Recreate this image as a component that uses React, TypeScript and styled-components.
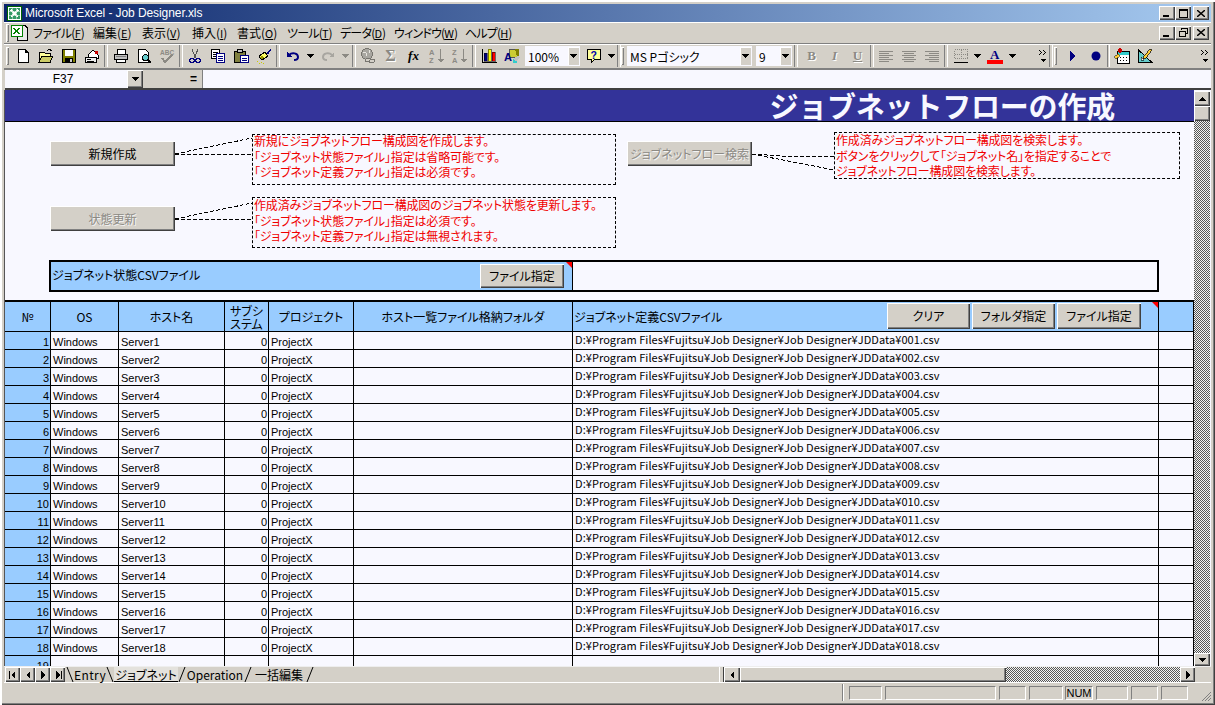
import React from "react";
import styled, { createGlobalStyle, css } from "styled-components";

const JP = `"Noto Sans CJK JP", "Liberation Sans", sans-serif`;
const FACE = "#D4D0C8";
const SHADOW = "#808080";

const Global = createGlobalStyle`
  html, body { margin: 0; padding: 0; background: ${FACE}; }
  * { box-sizing: border-box; }
  #root { width: 1215px; height: 705px; overflow: hidden; }
`;

const raised = css`
  background: ${FACE};
  box-shadow: inset 1px 1px 0 #fff, inset -1px -1px 0 #404040, inset -2px -2px 0 ${SHADOW};
`;
const checker = css`
  background-color: #fff;
  background-image: repeating-conic-gradient(#555 0 25%, #f2f2f2 0 50%);
  background-size: 2px 2px;
`;

const Window = styled.div`
  width: 1215px;
  height: 705px;
  padding: 4px 4px 3px 4px;
  display: flex;
  flex-direction: column;
  background: ${FACE};
  box-shadow: inset 2px 2px 0 #fff, inset -1px -1px 0 #404040, inset -2px -2px 0 ${SHADOW};
  font-family: ${JP};
  font-feature-settings: "palt";
  color: #000;
  font-size: 12px;
`;

/* ---------- title + menu ---------- */
const TitleBar = styled.div`
  height: 18px;
  flex: none;
  display: flex;
  align-items: center;
  gap: 3px;
  padding: 0 2px 0 3px;
  background: linear-gradient(to right, #0a246a, #a6caf0);
  color: #fff;
`;
const TitleText = styled.span`
  flex: 1;
  font-family: "Liberation Sans", sans-serif;
  font-size: 12px;
  letter-spacing: -0.08px;
`;
const CaptionGroup = styled.div`
  display: flex;
  align-items: center;
`;
const CaptionBtn = styled.div<{ $gap?: number }>`
  ${raised}
  width: 16px;
  height: 14px;
  margin-left: ${(p) => p.$gap ?? 0}px;
  display: flex;
  align-items: center;
  justify-content: center;
`;
const MenuBar = styled.div`
  height: 22px;
  flex: none;
  display: flex;
  align-items: center;
  padding-left: 2px;
  border-bottom: 1px solid ${SHADOW};
  box-shadow: inset 0 1px 0 #fff;
`;
const Grip = styled.div<{ $h?: number }>`
  width: 3px;
  height: ${(p) => p.$h ?? 18}px;
  flex: none;
  box-shadow: inset 1px 1px 0 #fff, inset -1px -1px 0 ${SHADOW};
`;
const MenuIcon = styled.div`
  width: 20px;
  flex: none;
  display: flex;
  justify-content: center;
`;
const MenuItem = styled.span<{ $w: number; $kana?: boolean }>`
  width: ${(p) => p.$w}px;
  flex: none;
  white-space: nowrap;
  padding-left: 4px;
  font-size: 12px;
  letter-spacing: ${(p) => (p.$kana ? -0.8 : 0)}px;
  u { font-size: 11px; letter-spacing: 0; }
`;
const MenuRight = styled.div`
  margin-left: auto;
  padding-right: 2px;
  display: flex;
`;

/* ---------- toolbar ---------- */
const ToolBar = styled.div`
  height: 26px;
  flex: none;
  display: flex;
  align-items: center;
  padding-left: 2px;
  border-bottom: 2px solid ${SHADOW};
  box-shadow: inset 0 1px 0 #fff;
`;
const Cell = styled.div<{ $w?: number }>`
  width: ${(p) => p.$w ?? 23}px;
  height: 22px;
  flex: none;
  display: flex;
  align-items: center;
  justify-content: center;
`;
const Sep = styled.div<{ $w?: number }>`
  width: ${(p) => p.$w ?? 6}px;
  height: 22px;
  flex: none;
  display: flex;
  justify-content: center;
  &::before {
    content: "";
    width: 2px;
    height: 100%;
    border-left: 1px solid ${SHADOW};
    border-right: 1px solid #fff;
  }
`;
const Combo = styled.div<{ $w: number; $ml?: number }>`
  width: ${(p) => p.$w}px;
  height: 20px;
  margin-left: ${(p) => p.$ml ?? 0}px;
  flex: none;
  display: flex;
  align-items: center;
  background: #f8f8ff;
  padding-left: 3px;
  font-size: 12px;
  white-space: nowrap;
`;
const ComboText = styled.span`
  flex: 1;
`;
const ComboArrow = styled.div`
  background: ${FACE};
  box-shadow: inset 1px 1px 0 #fff;
  width: 11px;
  height: 18px;
  margin-right: 1px;
  flex: none;
  display: flex;
  align-items: center;
  justify-content: center;
`;
const Glyph = styled.span<{ $serif?: boolean; $italic?: boolean; $u?: boolean; $size?: number }>`
  font-family: ${(p) => (p.$serif ? `"Liberation Serif", serif` : `"Liberation Sans", sans-serif`)};
  font-weight: bold;
  font-style: ${(p) => (p.$italic ? "italic" : "normal")};
  text-decoration: ${(p) => (p.$u ? "underline" : "none")};
  font-size: ${(p) => p.$size ?? 13}px;
  color: #8c8a84;
  text-shadow: 1px 1px 0 #fff;
`;
const FxGlyph = styled.span`
  font-family: "Liberation Serif", serif;
  font-style: italic;
  font-weight: bold;
  font-size: 13px;
  color: #000;
`;
const Flip = styled.span`
  display: block;
  transform: scaleX(-1);
`;

/* ---------- formula bar ---------- */
const FormulaBar = styled.div`
  height: 20px;
  flex: none;
  display: flex;
  border-bottom: 2px solid #404040;
  background: #f8f8ff;
  margin-left: 1px;
`;
const NameBox = styled.div`
  width: 138px;
  flex: none;
  display: flex;
  align-items: center;
  background: #f8f8ff;
`;
const NameText = styled.span`
  flex: 1;
  text-align: center;
  font-family: "Liberation Sans", sans-serif;
  font-size: 12px;
  padding-right: 6px;
`;
const NameArrow = styled.div`
  ${raised}
  width: 16px;
  height: 18px;
  flex: none;
  display: flex;
  align-items: center;
  justify-content: center;
`;
const FormulaGap = styled.div`
  width: 60px;
  flex: none;
  background: ${FACE};
  border-right: 1px solid ${SHADOW};
  display: flex;
  align-items: center;
  justify-content: flex-end;
  padding-right: 5px;
  font-weight: bold;
  font-family: "Liberation Sans", sans-serif;
`;

/* ---------- sheet ---------- */
const SheetArea = styled.div`
  flex: 1;
  min-height: 0;
  display: flex;
`;
const Sheet = styled.div`
  flex: 1;
  min-width: 0;
  background: #f8f8ff;
  border-left: 1px solid #555;
  overflow: hidden;
  font-size: 12px;
`;
const Banner = styled.div`
  height: 32px;
  background: #333399;
  border-bottom: 1px solid #000;
  color: #f8f8ff;
  font-size: 29px;
  font-weight: bold;
  line-height: 31px;
  text-align: right;
  padding-right: 79px;
  white-space: nowrap;
  font-feature-settings: normal;
  letter-spacing: -0.2px;
`;
const Controls = styled.div`
  height: 178px;
  padding-top: 10px;
`;
const ControlCols = styled.div`
  display: flex;
  height: 128px;
`;
const LeftCol = styled.div`
  width: 622px;
  padding: 2px 0 0 45px;
  display: flex;
  flex-direction: column;
  gap: 12px;
`;
const RightCol = styled.div`
  flex: 1;
`;
const Action = styled.div`
  display: flex;
  align-items: flex-start;
`;
const Push = styled.div<{ $off?: boolean; $w?: number; $h?: number; $mt?: number; $pb?: number }>`
  ${raised}
  width: ${(p) => p.$w ?? 125}px;
  height: ${(p) => p.$h ?? 25}px;
  margin-top: ${(p) => p.$mt ?? 0}px;
  padding-bottom: ${(p) => p.$pb ?? 0}px;
  flex: none;
  display: flex;
  align-items: center;
  justify-content: center;
  white-space: nowrap;
  color: ${(p) => (p.$off ? "#8c8a84" : "#000")};
  text-shadow: ${(p) => (p.$off ? "1px 1px 0 #f4f4f4" : "none")};
`;
const Callout = styled.div<{ $w: number; $h: number }>`
  width: ${(p) => p.$w}px;
  height: ${(p) => p.$h}px;
  flex: none;
  border: 1px dashed #000;
  color: #f00000;
  font-size: 12px;
  line-height: 15.5px;
  letter-spacing: -0.15px;
  padding: 0 0 0 1px;
  white-space: nowrap;
`;
const CalloutText = styled.div<{ $mt?: number }>`
  margin-top: ${(p) => p.$mt ?? -1}px;
`;
const Connector = styled.svg<{ $w: number; $h: number }>`
  width: ${(p) => p.$w}px;
  height: ${(p) => p.$h}px;
  flex: none;
  display: block;
`;
const CsvRow = styled.div`
  width: 1110px;
  height: 32px;
  margin: 0 0 0 44px;
  border: 2px solid #000;
  display: flex;
`;
const CsvLabel = styled.div`
  width: 522px;
  flex: none;
  position: relative;
  background: #99ccff;
  border-right: 1px solid #000;
  display: flex;
  align-items: center;
  justify-content: space-between;
  padding: 0 8px 0 1px;
`;
const CsvText = styled.span`
  margin-top: -3px;
`;
const Comment = styled.div`
  position: absolute;
  top: 0;
  right: 0;
  width: 0;
  height: 0;
  border-top: 6px solid #f00;
  border-left: 6px solid transparent;
`;

const COLS = "46px 68px 106px 44px 85px 219px 586px 35px";
const GridRow = styled.div<{ $head?: boolean }>`
  display: grid;
  grid-template-columns: ${COLS};
  height: ${(p) => (p.$head ? 32 : 18)}px;
  ${(p) => p.$head && "border-top: 2px solid #000;"}
`;
const GridCell = styled.div<{ $blue?: boolean; $num?: boolean }>`
  min-width: 0;
  border-right: 1px solid #000;
  border-bottom: 1px solid #000;
  background: ${(p) => (p.$blue ? "#99ccff" : "#f8f8ff")};
  text-align: ${(p) => (p.$num ? "right" : "left")};
  padding: 3px ${(p) => (p.$num ? 1 : 0)}px 0 ${(p) => (p.$num ? 0 : 2)}px;
  font-family: "Liberation Sans", ${JP};
  font-size: 11px;
  line-height: 14px;
  white-space: nowrap;
  overflow: hidden;
`;
const PathCell = styled(GridCell)`
  font-family: ${JP};
  font-size: 11px;
  line-height: 15px;
  letter-spacing: 0.06px;
  padding-top: 0;
`;
const HeadCell = styled.div`
  position: relative;
  min-width: 0;
  border-right: 1px solid #000;
  border-bottom: 1px solid #000;
  background: #99ccff;
  display: flex;
  align-items: center;
  justify-content: center;
  text-align: center;
  line-height: 13px;
  white-space: nowrap;
`;
const HeadFileCell = styled(HeadCell)`
  justify-content: flex-start;
  text-align: left;
  padding-left: 1px;
`;
const HeadLabel = styled.span`
  width: 313px;
  flex: none;
`;
const HeadButtons = styled.div`
  display: flex;
  gap: 2px;
  margin-top: -1px;
`;

/* ---------- scroll bars ---------- */
const VScroll = styled.div`
  width: 17px;
  flex: none;
  display: flex;
  flex-direction: column;
  padding: 1px 1px 0 0;
  background: #f8f8ff;
`;
const ScrollBtn = styled.div<{ $w?: number; $h?: number }>`
  ${raised}
  width: ${(p) => p.$w ?? 16}px;
  height: ${(p) => p.$h ?? 15}px;
  flex: none;
  display: flex;
  align-items: center;
  justify-content: center;
`;
const ScrollTrack = styled.div`
  ${checker}
  flex: 1;
`;
const BottomBar = styled.div`
  height: 17px;
  flex: none;
  display: flex;
  padding-left: 1px;
  border-top: 1px solid #eee;
  border-bottom: 1px solid #fff;
`;
const Tabs = styled.div`
  width: 654px;
  flex: none;
  display: flex;
  align-items: flex-start;
  padding-left: 1px;
  height: 15px;
`;
const Tab = styled.span<{ $active?: boolean; $w: number; $ls?: number }>`
  width: ${(p) => p.$w}px;
  flex: none;
  height: 15px;
  line-height: 15px;
  text-align: center;
  white-space: nowrap;
  font-size: 12px;
  letter-spacing: ${(p) => p.$ls ?? 0}px;
  ${(p) => p.$active && "border-bottom: 1px solid #000; background: #e4e2dd;"}
`;
const Slash = styled.svg`
  width: 8px;
  height: 15px;
  flex: none;
  display: block;
`;
const Splitter = styled.div`
  width: 5px;
  flex: none;
  height: 15px;
  border-left: 1px solid #fff;
  border-right: 1px solid #404040;
`;
const HThumb = styled.div`
  ${raised}
  width: 266px;
  flex: none;
  height: 15px;
`;
const HTrack = styled.div`
  ${checker}
  flex: 1;
  height: 15px;
`;

/* ---------- status ---------- */
const StatusBar = styled.div`
  height: 19px;
  flex: none;
  display: flex;
  align-items: center;
  padding-left: 838px;
`;
const StatusDivider = styled.div`
  width: 2px;
  height: 17px;
  flex: none;
  margin-right: 2px;
  border-left: 1px solid ${SHADOW};
  border-right: 1px solid #fff;
`;
const StatusPanel = styled.div<{ $w: number; $ml?: number }>`
  width: ${(p) => p.$w}px;
  height: 14px;
  margin-left: ${(p) => p.$ml ?? 3}px;
  flex: none;
  border: 1px solid;
  border-color: ${SHADOW} #fff #fff ${SHADOW};
  font-family: "Liberation Sans", sans-serif;
  font-size: 11px;
  line-height: 12px;
  text-align: center;
`;
const GripCorner = styled.svg`
  margin-left: 12px;
  width: 12px;
  height: 12px;
  flex: none;
  display: block;
  align-self: flex-end;
`;

/* ---------- icons ---------- */
const IconSvg = styled.svg`
  display: block;
`;
type IconProps = { children: React.ReactNode; w?: number; h?: number };
const Ic = ({ children, w = 16, h = 16 }: IconProps) => (
  <IconSvg width={w} height={h} viewBox={`0 0 ${w} ${h}`} shapeRendering="crispEdges">
    {children}
  </IconSvg>
);
const Down = ({ c = "#000" }: { c?: string }) => (
  <Ic w={7} h={4}><path d="M0 0h7L3.5 4z" fill={c} /></Ic>
);
const ArrowV = ({ up }: { up?: boolean }) => (
  <Ic w={7} h={4}><path d={up ? "M3.5 0L7 4H0z" : "M0 0h7L3.5 4z"} fill="#000" /></Ic>
);
const ArrowH = ({ left, bar }: { left?: boolean; bar?: boolean }) => (
  <Ic w={8} h={8}>
    <path d={left ? "M6 0v8L2 4z" : "M2 0v8l4-4z"} fill="#000" />
    {bar && <rect x={left ? 0 : 7} y={0} width={1} height={8} fill="#000" />}
  </Ic>
);
const Doc = () => (
  <Ic><path d="M3 1.5h7l3 3v10H3z" fill="#fff" stroke="#000" /><path d="M10 1.5v3h3" fill="none" stroke="#000" /></Ic>
);
const Open = () => (
  <Ic>
    <path d="M1 4h5l1 1h5v9H1z" fill="#ffff99" stroke="#000" />
    <path d="M1 14l3-6h11l-3 6z" fill="#cccc66" stroke="#000" />
    <path d="M9 3l2-2 3 2" fill="none" stroke="#000" />
  </Ic>
);
const Save = () => (
  <Ic>
    <rect x="1.5" y="1.5" width="13" height="13" fill="#808000" stroke="#000" />
    <rect x="4" y="2" width="8" height="6" fill="#fff" />
    <rect x="4" y="10" width="8" height="5" fill="#000" />
    <rect x="9" y="11" width="2" height="3" fill="#ccc" />
  </Ic>
);
const Mail = () => (
  <Ic>
    <path d="M4 7l5-5 5 5v3H4z" fill="#fff" stroke="#000" />
    <rect x="11" y="3" width="3" height="3" fill="#c00" />
    <rect x="1.5" y="9.5" width="11" height="5" fill="#eee" stroke="#000" />
    <path d="M3 11.5h4M3 13h7" stroke="#000" />
  </Ic>
);
const Printer = () => (
  <Ic>
    <path d="M4 6V1.5h8V6" fill="#fff" stroke="#000" />
    <path d="M1.5 6.5h13v5h-13z" fill="#c0c0c0" stroke="#000" />
    <path d="M3.5 11.5h9v3h-9z" fill="#fff" stroke="#000" />
    <path d="M3 8.5h10" stroke="#808080" />
  </Ic>
);
const Preview = () => (
  <Ic>
    <path d="M2.5 1.5h7l3 3v10h-10z" fill="#fff" stroke="#000" />
    <circle cx="9.5" cy="9.5" r="3" fill="#66cccc" stroke="#000" />
    <path d="M12 12l3 3" stroke="#000" strokeWidth="2" />
  </Ic>
);
const Spell = () => (
  <Ic>
    <text x="1" y="6.5" fontSize="6.5" fontFamily="Liberation Sans" fontWeight="bold" fill="#8c8a84">ABC</text>
    <path d="M3 10l3 4 7-7" fill="none" stroke="#8c8a84" strokeWidth="2" />
  </Ic>
);
const Cut = () => (
  <Ic>
    <path d="M5 1l3.5 9M11 1L7.5 10" stroke="#555" fill="none" />
    <circle cx="5" cy="12.5" r="2.2" fill="none" stroke="#000080" strokeWidth="1.3" />
    <circle cx="11" cy="12.5" r="2.2" fill="none" stroke="#000080" strokeWidth="1.3" />
  </Ic>
);
const Copy = () => (
  <Ic>
    <rect x="1.5" y="1.5" width="8" height="9" fill="#fff" stroke="#000" />
    <path d="M3 4h5M3 6h5M3 8h3" stroke="#000" />
    <rect x="6.5" y="5.5" width="8" height="9" fill="#fff" stroke="#000080" />
    <path d="M8 8h5M8 10h5M8 12h5" stroke="#000080" />
  </Ic>
);
const Paste = () => (
  <Ic>
    <rect x="1.5" y="3.5" width="11" height="11" fill="#808040" stroke="#000" />
    <rect x="4.5" y="1.5" width="5" height="3" fill="#c0c0c0" stroke="#000" />
    <rect x="7.5" y="7.5" width="8" height="7" fill="#fff" stroke="#000080" />
    <path d="M9 10h5M9 12h5" stroke="#000080" />
  </Ic>
);
const Brush = () => (
  <Ic>
    <path d="M3 8l6-4 3 4-6 4z" fill="#ffff66" stroke="#000" />
    <path d="M10 5l4-4 1 1-3 5z" fill="#000080" />
    <path d="M1 13h1M3 15h1M5 14h1M7 15h1" stroke="#cccc00" />
    <path d="M4 10l3-2M5 11l3-2" stroke="#999900" />
  </Ic>
);
const Undo = ({ c = "#000080" }: { c?: string }) => (
  <Ic>
    <path d="M2 4v5h5z" fill={c} />
    <path d="M4 7c3-3 9-2 9 2 0 2-2 3-4 3" fill="none" stroke={c} strokeWidth="2" shapeRendering="auto" />
  </Ic>
);
const LinkIc = () => (
  <Ic>
    <circle cx="7" cy="6" r="5.5" fill="#a8a6a0" stroke="#77756f" />
    <path d="M3 4l3 1 1 3M9 2l1 3" stroke="#e8e6e0" fill="none" />
    <rect x="5.5" y="10.5" width="5" height="3" rx="1.5" fill="#d4d0c8" stroke="#77756f" />
    <rect x="9.5" y="11.5" width="5" height="3" rx="1.5" fill="#d4d0c8" stroke="#77756f" />
  </Ic>
);
const SortIc = ({ top, bot }: { top: string; bot: string }) => (
  <Ic>
    <text x="0" y="7" fontSize="7.5" fontFamily="Liberation Sans" fontWeight="bold" fill="#8c8a84">{top}</text>
    <text x="0" y="15" fontSize="7.5" fontFamily="Liberation Sans" fontWeight="bold" fill="#8c8a84">{bot}</text>
    <path d="M11.5 1v11" stroke="#8c8a84" />
    <path d="M9 11h6l-3 4z" fill="#8c8a84" />
  </Ic>
);
const Chart = () => (
  <Ic>
    <rect x="3" y="5" width="3" height="8" fill="#000080" stroke="#000" strokeWidth=".5" />
    <rect x="7" y="1" width="3" height="12" fill="#ff0" stroke="#000" strokeWidth=".5" />
    <rect x="11" y="4" width="3" height="9" fill="#f00" stroke="#000" strokeWidth=".5" />
    <path d="M1 1v13h15" fill="none" stroke="#000" />
  </Ic>
);
const Drawing = () => (
  <Ic>
    <rect x="5.5" y="1.5" width="8" height="8" fill="#cccc33" stroke="#555" />
    <path d="M11 1h4v8h-2z" fill="#808000" />
    <text x="0" y="13" fontSize="11" fontFamily="Liberation Sans" fontWeight="bold" fill="#000080">A</text>
    <circle cx="11" cy="13" r="2.5" fill="#33cccc" />
    <path d="M9 11l5-3 2 2-4 3z" fill="#c0c0c0" />
  </Ic>
);
const Help = () => (
  <Ic>
    <path d="M1.5 1.5h13v10h-6l-3 3v-3h-4z" fill="#ffff99" stroke="#000" />
    <text x="4.6" y="10.5" fontSize="10.5" fontFamily="Liberation Sans" fontWeight="bold" fill="#0000aa">?</text>
  </Ic>
);
const Align = ({ mode }: { mode: "l" | "c" | "r" }) => {
  const pick = (long: boolean) => {
    const len = long ? 14 : 10;
    const x = mode === "l" ? 1 : mode === "c" ? 8 - len / 2 : 15 - len;
    return [x, len];
  };
  return (
    <Ic>
      {[3, 5, 7, 9, 11, 13].map((y, i) => {
        const [x, len] = pick(i % 2 === 0);
        return <path key={y} d={`M${x} ${y}h${len}`} stroke="#8c8a84" />;
      })}
    </Ic>
  );
};
const Borders = () => (
  <Ic>
    <path d="M1.5 1.5h13v9h-13zM8 1.5v9M1.5 6h13" fill="none" stroke="#8c8a84" strokeDasharray="1 1" />
    <path d="M1 14h14" stroke="#000" strokeWidth="1" />
  </Ic>
);
const FontColor = () => (
  <Ic h={16}>
    <text x="3" y="11" fontSize="13" fontFamily="Liberation Serif" fontWeight="bold" fill="#000080">A</text>
    <rect x="0" y="12" width="16" height="4" fill="#f00" />
  </Ic>
);
const Chevrons = () => (
  <Ic w={8} h={14}>
    <path d="M0 1l2.5 2.5L0 6M4 1l2.5 2.5L4 6" fill="none" stroke="#000" strokeWidth="1.2" />
    <path d="M1 10h6l-3 3z" fill="#000" />
  </Ic>
);
const Play = () => (
  <Ic w={8} h={10}><path d="M1 0l6 5-6 5z" fill="#000080" /></Ic>
);
const Rec = () => (
  <Ic w={10} h={10}><circle cx="5" cy="5" r="4.5" fill="#000080" shapeRendering="auto" /></Ic>
);
const Form = () => (
  <Ic>
    <rect x="3.5" y="3.5" width="12" height="12" fill="#fff" stroke="#000" />
    <rect x="4" y="4" width="11" height="3" fill="#33cccc" />
    <path d="M6 9h1M9 9h1M12 9h1M6 12h1M9 12h1M12 12h1" stroke="#000" />
    <circle cx="6" cy="2.5" r="2.3" fill="#c00" />
    <path d="M0 9l4-3 2 2-4 3z" fill="#ffcc33" stroke="#000" strokeWidth=".5" />
  </Ic>
);
const Design = () => (
  <Ic>
    <path d="M1.5 2v12.5H15z" fill="#66cccc" stroke="#000" />
    <path d="M4 9v3h3z" fill="#fff" stroke="#000" strokeWidth=".6" />
    <path d="M7 8l6-7 2 1-6 8-3 1z" fill="#ffcc33" stroke="#000" strokeWidth=".7" />
  </Ic>
);
const ExcelLogo = () => (
  <Ic w={15} h={15}>
    <rect x="0.5" y="0.5" width="14" height="14" fill="#fff" stroke="#006600" />
    <rect x="2" y="2" width="11" height="11" fill="#339966" />
    <path d="M4 4l7 7M11 4l-7 7" stroke="#fff" strokeWidth="2" />
    <path d="M2 5.5h11M2 9.5h11M5.5 2v11M9.5 2v11" stroke="#cfe8d8" strokeWidth=".6" />
  </Ic>
);
const SheetIc = () => (
  <Ic w={17} h={17}>
    <path d="M6 1.5h8l2 2v13H6z" fill="#e8e8e8" stroke="#000" />
    <rect x="0.5" y="1.5" width="11" height="11" fill="#fff" stroke="#008000" />
    <path d="M3 4l5 6M8 4l-5 6" stroke="#008000" strokeWidth="1.6" />
  </Ic>
);
const MinIc = () => <Ic w={8} h={8}><rect x="0" y="6" width="6" height="2" fill="#000" /></Ic>;
const MaxIc = () => <Ic w={9} h={9}><path d="M.5 1h8v7.5h-8z" fill="none" stroke="#000" /><rect x="0" y="0" width="9" height="2" fill="#000" /></Ic>;
const CloseIc = () => <Ic w={8} h={7}><path d="M0 0l8 7M8 0L0 7" stroke="#000" strokeWidth="1.4" shapeRendering="auto" /></Ic>;
const RestoreIc = () => (
  <Ic w={9} h={9}>
    <path d="M2.5 2V.5h6v5H7" fill="none" stroke="#000" />
    <path d="M.5 3h6v5.5h-6z" fill="none" stroke="#000" />
    <rect x="0" y="2.5" width="7" height="1.5" fill="#000" />
  </Ic>
);

/* ---------- data ---------- */
const MENU: [string, string, number, boolean][] = [
  ["ファイル", "F", 60, true],
  ["編集", "E", 49, false],
  ["表示", "V", 50, false],
  ["挿入", "I", 45, false],
  ["書式", "O", 50, false],
  ["ツール", "T", 53, true],
  ["データ", "D", 54, true],
  ["ウィンドウ", "W", 71, true],
  ["ヘルプ", "H", 50, true],
];
const ROWS = Array.from({ length: 18 }, (_, i) => i + 1);
const pathOf = (n: number) =>
  `D:¥Program Files¥Fujitsu¥Job Designer¥Job Designer¥JDData¥${String(n).padStart(3, "0")}.csv`;

const Dash = ({ d }: { d: string }) => (
  <path d={d} fill="none" stroke="#000" strokeDasharray="4 2" shapeRendering="crispEdges" />
);

const STATUS: [number, string, number][] = [
  [33, "", 3],
  [111, "", 3],
  [27, "", 3],
  [34, "", 3],
  [28, "NUM", 2],
  [32, "", 3],
  [27, "", 3],
  [27, "", 3],
];

export default function App() {
  return (
    <Window>
      <Global />
      <TitleBar>
        <ExcelLogo />
        <TitleText>Microsoft Excel - Job Designer.xls</TitleText>
        <CaptionGroup>
          <CaptionBtn><MinIc /></CaptionBtn>
          <CaptionBtn><MaxIc /></CaptionBtn>
          <CaptionBtn $gap={2}><CloseIc /></CaptionBtn>
        </CaptionGroup>
      </TitleBar>

      <MenuBar>
        <Grip />
        <MenuIcon><SheetIc /></MenuIcon>
        {MENU.map(([label, key, w, kana]) => (
          <MenuItem key={key} $w={w} $kana={kana}>
            {label}(<u>{key}</u>)
          </MenuItem>
        ))}
        <MenuRight>
          <CaptionBtn><MinIc /></CaptionBtn>
          <CaptionBtn><RestoreIc /></CaptionBtn>
          <CaptionBtn $gap={2}><CloseIc /></CaptionBtn>
        </MenuRight>
      </MenuBar>

      <ToolBar>
        <Grip />
        <Cell $w={2} />
        <Cell><Doc /></Cell>
        <Cell><Open /></Cell>
        <Cell><Save /></Cell>
        <Cell><Mail /></Cell>
        <Sep />
        <Cell><Printer /></Cell>
        <Cell><Preview /></Cell>
        <Cell><Spell /></Cell>
        <Sep $w={5} />
        <Cell><Cut /></Cell>
        <Cell><Copy /></Cell>
        <Cell><Paste /></Cell>
        <Cell><Brush /></Cell>
        <Sep />
        <Cell><Undo /></Cell>
        <Cell $w={12}><Down /></Cell>
        <Cell><Flip><Undo c="#a8a6a0" /></Flip></Cell>
        <Cell $w={12}><Down c="#8c8a84" /></Cell>
        <Sep $w={5} />
        <Cell><LinkIc /></Cell>
        <Cell><Glyph $serif $size={16}>Σ</Glyph></Cell>
        <Cell><FxGlyph>fx</FxGlyph></Cell>
        <Cell><SortIc top="A" bot="Z" /></Cell>
        <Cell><SortIc top="Z" bot="A" /></Cell>
        <Sep />
        <Cell><Chart /></Cell>
        <Cell><Drawing /></Cell>
        <Combo $w={55} $ml={2}>
          <ComboText>100%</ComboText>
          <ComboArrow><Down /></ComboArrow>
        </Combo>
        <Cell $w={2} />
        <Cell><Help /></Cell>
        <Cell $w={12}><Down /></Cell>
        <Sep $w={4} />
        <Grip />
        <Cell $w={3} />
        <Combo $w={125}>
          <ComboText>MS Pゴシック</ComboText>
          <ComboArrow><Down /></ComboArrow>
        </Combo>
        <Combo $w={36} $ml={4}>
          <ComboText>9</ComboText>
          <ComboArrow><Down /></ComboArrow>
        </Combo>
        <Sep $w={8} />
        <Cell><Glyph $serif>B</Glyph></Cell>
        <Cell><Glyph $serif $italic>I</Glyph></Cell>
        <Cell><Glyph $serif $u>U</Glyph></Cell>
        <Sep $w={5} />
        <Cell><Align mode="l" /></Cell>
        <Cell><Align mode="c" /></Cell>
        <Cell><Align mode="r" /></Cell>
        <Sep />
        <Cell><Borders /></Cell>
        <Cell $w={11}><Down /></Cell>
        <Cell><FontColor /></Cell>
        <Cell $w={12}><Down /></Cell>
        <Cell $w={20} />
        <Cell $w={10}><Chevrons /></Cell>
        <Sep />
        <Grip />
        <Cell $w={4} />
        <Cell><Play /></Cell>
        <Cell><Rec /></Cell>
        <Sep $w={3} />
        <Cell><Form /></Cell>
        <Cell><Design /></Cell>
        <Cell $w={44} />
        <Cell $w={10}><Chevrons /></Cell>
      </ToolBar>

      <FormulaBar>
        <NameBox>
          <NameText>F37</NameText>
          <NameArrow><ArrowV /></NameArrow>
        </NameBox>
        <FormulaGap>=</FormulaGap>
      </FormulaBar>

      <SheetArea>
        <Sheet>
          <Banner>ジョブネットフローの作成</Banner>
          <Controls>
            <ControlCols>
              <LeftCol>
                <Action>
                  <Push $mt={7}>新規作成</Push>
                  <Connector $w={77} $h={51} viewBox="0 0 77 51">
                    <Dash d="M0 20L77 4" />
                    <Dash d="M0 20H77" />
                  </Connector>
                  <Callout $w={364} $h={51}>
                    <CalloutText $mt={-2}>
                      新規にジョブネットフロー構成図を作成します。<br />
                      「ジョブネット状態ファイル」指定は省略可能です。<br />
                      「ジョブネット定義ファイル」指定は必須です。
                    </CalloutText>
                  </Callout>
                </Action>
                <Action>
                  <Push $mt={9} $off>状態更新</Push>
                  <Connector $w={77} $h={51} viewBox="0 0 77 51">
                    <Dash d="M0 22L77 6" />
                    <Dash d="M0 22H77" />
                  </Connector>
                  <Callout $w={364} $h={51}>
                    <CalloutText>
                      作成済みジョブネットフロー構成図のジョブネット状態を更新します。<br />
                      「ジョブネット状態ファイル」指定は必須です。<br />
                      「ジョブネット定義ファイル」指定は無視されます。
                    </CalloutText>
                  </Callout>
                </Action>
              </LeftCol>
              <RightCol>
                <Action>
                  <Push $mt={9} $off>ジョブネットフロー検索</Push>
                  <Connector $w={82} $h={47} viewBox="0 0 82 47">
                    <Dash d="M0 22L30 24H82" />
                    <Dash d="M0 22L82 38" />
                  </Connector>
                  <Callout $w={346} $h={47}>
                    <CalloutText>
                      作成済みジョブネットフロー構成図を検索します。<br />
                      ボタンをクリックして「ジョブネット名」を指定することで<br />
                      ジョブネットフロー構成図を検索します。
                    </CalloutText>
                  </Callout>
                </Action>
              </RightCol>
            </ControlCols>
            <CsvRow>
              <CsvLabel>
                <CsvText>ジョブネット状態CSVファイル</CsvText>
                <Push $w={84} $h={24} $pb={2}>ファイル指定</Push>
                <Comment />
              </CsvLabel>
            </CsvRow>
          </Controls>

          <GridRow $head>
            <HeadCell>№</HeadCell>
            <HeadCell>OS</HeadCell>
            <HeadCell>ホスト名</HeadCell>
            <HeadCell>サブシ<br />ステム</HeadCell>
            <HeadCell>プロジェクト</HeadCell>
            <HeadCell>ホスト一覧ファイル格納フォルダ</HeadCell>
            <HeadFileCell>
              <HeadLabel>ジョブネット定義CSVファイル</HeadLabel>
              <HeadButtons>
                <Push $w={83} $h={26} $pb={2}>クリア</Push>
                <Push $w={83} $h={26} $pb={2}>フォルダ指定</Push>
                <Push $w={84} $h={26} $pb={2}>ファイル指定</Push>
              </HeadButtons>
              <Comment />
            </HeadFileCell>
            <HeadCell />
          </GridRow>

          {ROWS.map((n) => (
            <GridRow key={n}>
              <GridCell $blue $num>{n}</GridCell>
              <GridCell>Windows</GridCell>
              <GridCell>{`Server${n}`}</GridCell>
              <GridCell $num>0</GridCell>
              <GridCell>ProjectX</GridCell>
              <GridCell />
              <PathCell>{pathOf(n)}</PathCell>
              <GridCell />
            </GridRow>
          ))}
          <GridRow>
            <GridCell $blue $num>19</GridCell>
            <GridCell />
            <GridCell />
            <GridCell />
            <GridCell />
            <GridCell />
            <GridCell />
            <GridCell />
          </GridRow>
        </Sheet>
        <VScroll>
          <ScrollBtn><ArrowV up /></ScrollBtn>
          <ScrollBtn />
          <ScrollTrack />
          <ScrollBtn $h={13}><ArrowV /></ScrollBtn>
        </VScroll>
      </SheetArea>

      <BottomBar>
        <ScrollBtn $w={15}><ArrowH left bar /></ScrollBtn>
        <ScrollBtn $w={15}><ArrowH left /></ScrollBtn>
        <ScrollBtn $w={15}><ArrowH /></ScrollBtn>
        <ScrollBtn $w={15}><ArrowH bar /></ScrollBtn>
        <Tabs>
          <Slash viewBox="0 0 8 15"><path d="M1 0l6 15" stroke="#000" /></Slash>
          <Tab $w={32} $ls={0.4}>Entry</Tab>
          <Slash viewBox="0 0 8 15"><path d="M1 0l6 15" stroke="#000" /></Slash>
          <Tab $active $w={64}>ジョブネット</Tab>
          <Slash viewBox="0 0 8 15"><path d="M7 0L1 15" stroke="#000" /></Slash>
          <Tab $w={58}>Operation</Tab>
          <Slash viewBox="0 0 8 15"><path d="M7 0L1 15" stroke="#000" /></Slash>
          <Tab $w={54}>一括編集</Tab>
          <Slash viewBox="0 0 8 15"><path d="M7 0L1 15" stroke="#000" /></Slash>
        </Tabs>
        <Splitter />
        <ScrollBtn $w={16}><ArrowH left /></ScrollBtn>
        <HThumb />
        <HTrack />
        <ScrollBtn $w={15}><ArrowH /></ScrollBtn>
        <Cell $w={16} />
      </BottomBar>

      <StatusBar>
        <StatusDivider />
        {STATUS.map(([w, t, ml], i) => (
          <StatusPanel key={i} $w={w} $ml={ml}>{t}</StatusPanel>
        ))}
        <GripCorner viewBox="0 0 12 12">
          <path d="M11 2L2 11M11 5L5 11M11 8L8 11" stroke="#808080" />
        </GripCorner>
      </StatusBar>
    </Window>
  );
}
